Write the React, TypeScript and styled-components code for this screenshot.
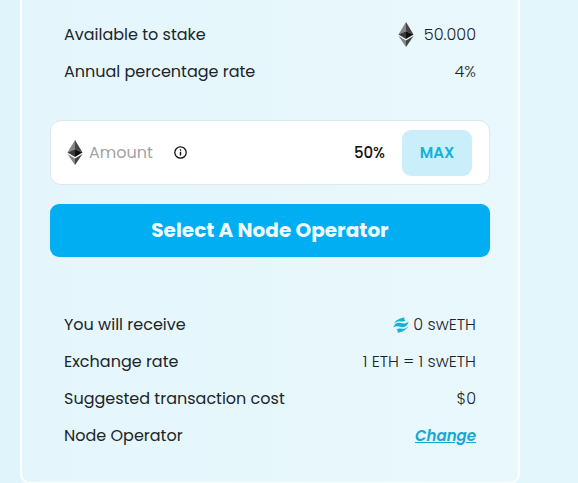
import React from 'react';
import styled, { createGlobalStyle } from 'styled-components';

const GlobalStyle = createGlobalStyle`
  *, *::before, *::after { box-sizing: border-box; }
  body {
    margin: 0;
    background: #e0f5fb;
    color: #1c2529;
    font-family: Poppins, Inter, sans-serif;
    font-size: 16px;
    line-height: 24px;
  }
  button, input { font: inherit; }
`;

const Page = styled.main`
  padding: 0 58px 0 20px;
  background: linear-gradient(90deg, #dff4fb, #e2f6fb);
`;

const Card = styled.section`
  padding: 16px 28px 28px;
  border: 2px solid #fbffff;
  border-top: 0;
  border-radius: 0 0 10px 10px;
  background: linear-gradient(90deg, #e4f6fc, #e9f8fc);
`;

const Details = styled.dl`
  margin: 0;
  padding: 0 14px;
`;

const Row = styled.div`
  display: flex;
  align-items: center;
  justify-content: space-between;
  height: 37px;
`;

const Term = styled.dt`
  margin: 0;
`;

const Value = styled.dd<{ $gap?: number }>`
  display: flex;
  align-items: center;
  gap: ${({ $gap = 0 }) => $gap}px;
  margin: 0;
  font-weight: 300;
`;

const AmountBox = styled.div`
  display: flex;
  align-items: center;
  height: 65px;
  margin-top: 30px;
  padding: 0 17px 0 16px;
  border: 1px solid #dfe9ed;
  border-radius: 11px;
  background: #fff;
`;

const AmountInput = styled.input`
  width: 80px;
  margin-left: 6px;
  padding: 0;
  border: 0;
  outline: 0;
  background: transparent;
  color: #1c2529;
  &::placeholder { color: #a3a3a3; opacity: 1; }
`;

const InfoButton = styled.button`
  display: flex;
  margin-left: 5px;
  padding: 0;
  border: 0;
  background: none;
  color: #111;
  cursor: pointer;
`;

const HalfButton = styled.button`
  margin-left: auto;
  padding: 0;
  border: 0;
  background: none;
  color: #111;
  font-size: 15px;
  font-weight: 500;
  cursor: pointer;
`;

const MaxButton = styled.button`
  width: 70px;
  height: 46px;
  margin-left: 17px;
  padding: 0;
  border: 0;
  border-radius: 9px;
  background: #caeffa;
  color: #14b0dc;
  font-size: 15px;
  font-weight: 600;
  cursor: pointer;
`;

const SubmitButton = styled.button`
  display: block;
  width: 100%;
  height: 53px;
  margin: 19px 0 49px;
  padding: 0 0 2px;
  border: 0;
  border-radius: 9px;
  background: #02aef2;
  color: #effcff;
  font-size: 20px;
  font-weight: 700;
  cursor: pointer;
`;

const ChangeLink = styled.a`
  color: #14a8d3;
  font-size: 15px;
  font-style: italic;
  font-weight: 600;
  text-decoration: underline;
`;

function EthIcon() {
  return (
    <svg width="16" height="25" viewBox="0 0 16 25" aria-hidden="true">
      <path d="M8 0 0.5 12.5 8 9.2Z" fill="#858585" />
      <path d="M8 0v9.2l7.5 3.3Z" fill="#444" />
      <path d="M8 9.2 0.5 12.5 8 17Z" fill="#393939" />
      <path d="M8 9.2v7.8l7.5-4.5Z" fill="#111" />
      <path d="M0.5 14 8 18.5V25Z" fill="#858585" />
      <path d="M15.5 14 8 18.5V25Z" fill="#414141" />
    </svg>
  );
}

function InfoIcon() {
  return (
    <svg width="13" height="13" viewBox="0 0 13 13" aria-hidden="true">
      <circle cx="6.5" cy="6.5" r="5.7" fill="none" stroke="currentColor" strokeWidth="1.3" />
      <path d="M6.5 5.8v3.8M6.5 3.3v1.4" stroke="currentColor" strokeWidth="1.4" />
    </svg>
  );
}

function SwellIcon() {
  return (
    <svg width="16" height="16" viewBox="0 0 16 16" fill="#19afd4" aria-hidden="true">
      <path d="M.8 6.6C3 3.400 6.500.800 11.800.500 10.800 1.800 11.200 3 12.600 3.600 10.500 4.800 9 4.500 7 4.200 4.800 3.900 3 4.800.8 6.600Z" />
      <path d="M.3 10.600C1.500 6.800 4 5.200 7.500 6.100c3 .8 5.500.8 8.200-1.600-1.200 4.500-4 6.300-7.600 5.400C5 9.100 3 8.800.3 10.600Z" />
      <path d="M15.200 9.400C13 12.600 9.500 15.200 4.200 15.500c1-1.300.6-2.500-.8-3.100 2.100-1.200 3.600-.9 5.600-.6 2.200.3 4-.6 6.200-2.400Z" />
    </svg>
  );
}

export default function App() {
  return (
    <>
      <GlobalStyle />
      <Page>
        <Card>
          <Details>
            <Row>
              <Term>Available to stake</Term>
              <Value $gap={10}><EthIcon />50.000</Value>
            </Row>
            <Row>
              <Term>Annual percentage rate</Term>
              <Value>4%</Value>
            </Row>
          </Details>
          <AmountBox>
            <EthIcon />
            <AmountInput aria-label="Amount" placeholder="Amount" inputMode="decimal" />
            <InfoButton type="button" aria-label="Amount information"><InfoIcon /></InfoButton>
            <HalfButton type="button">50%</HalfButton>
            <MaxButton type="button">MAX</MaxButton>
          </AmountBox>
          <SubmitButton type="button">Select A Node Operator</SubmitButton>
          <Details>
            <Row>
              <Term>You will receive</Term>
              <Value $gap={4}><SwellIcon />0 swETH</Value>
            </Row>
            <Row>
              <Term>Exchange rate</Term>
              <Value>1 ETH = 1 swETH</Value>
            </Row>
            <Row>
              <Term>Suggested transaction cost</Term>
              <Value>$0</Value>
            </Row>
            <Row>
              <Term>Node Operator</Term>
              <Value><ChangeLink href="#operators">Change</ChangeLink></Value>
            </Row>
          </Details>
        </Card>
      </Page>
    </>
  );
}
